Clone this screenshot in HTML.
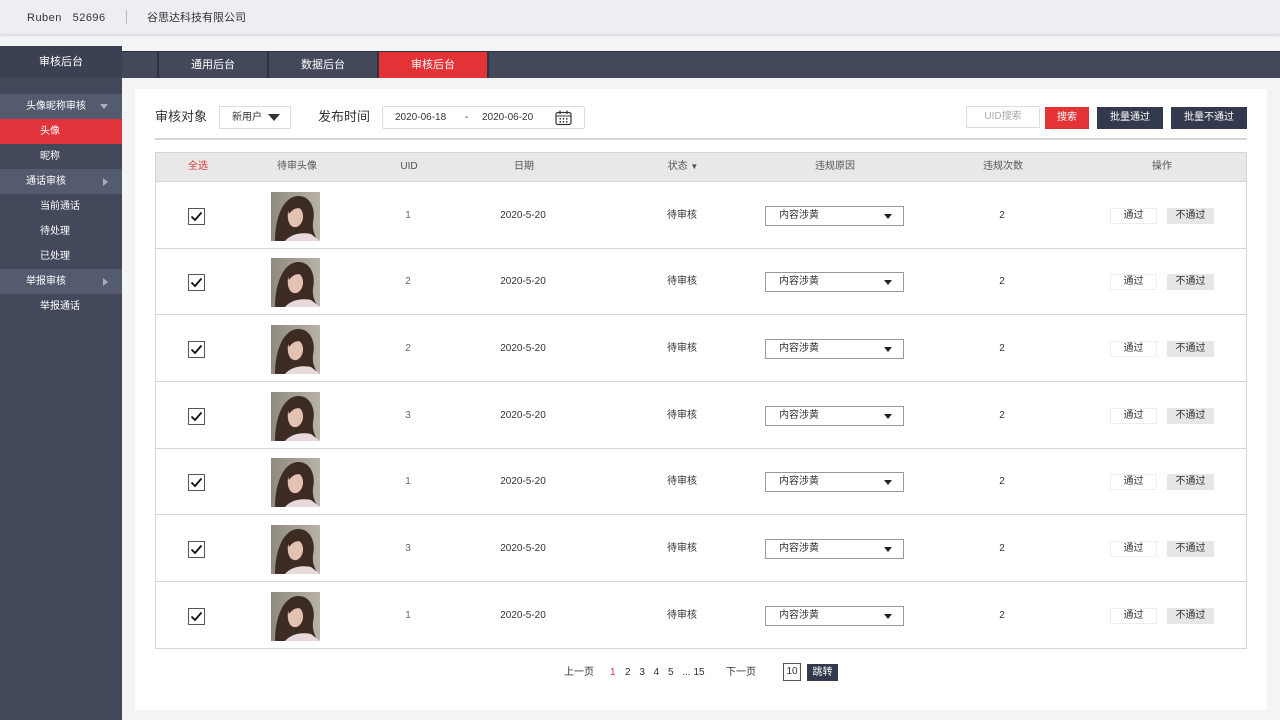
<!DOCTYPE html><html><head><meta charset="utf-8"><style>
*{margin:0;padding:0;box-sizing:border-box}
body{width:1280px;height:720px;overflow:hidden;background:#f3f4f6;font-family:"Liberation Sans","Noto Sans CJK SC",sans-serif;position:relative;font-size:10px;line-height:14px;color:#333}
.a{position:absolute}
.top{left:0;top:0;width:1280px;height:34px;background:#eceef2;box-shadow:0 1px 3px #c8ccd6}
.side{left:0;top:46px;width:122px;height:674px;background:#43485b}
.sh{left:0;top:46px;width:122px;height:32px;background:#3b4053;color:#fff;font-size:11px;text-align:center;line-height:32px}
.tabs{left:122px;top:51px;width:1158px;height:27px;background:#43485b;border-top:1px solid #2e3242}
.tab{top:0;height:26px;width:110px;color:#fff;font-size:11px;text-align:center;line-height:26px;border-left:2px solid #2e3242}
.it{left:0;width:122px;height:25px;line-height:25px;color:#fff;font-size:10px}
.sec{background:#555b6f;padding-left:26px}
.sub{padding-left:40px}
.tri{position:absolute;right:14px;top:10px;width:0;height:0}
.panel{left:135px;top:89px;width:1132px;height:621px;background:#fff}
.btn{height:22px;line-height:22px;text-align:center;font-size:10px}
.row{left:155px;width:1092px;border-bottom:1px solid #d6d6d6}
.c{position:absolute;text-align:center;transform:translateX(-50%);white-space:nowrap;height:14px;line-height:14px}
.cb{width:17px;height:17px;border:1px solid #555;background:#fff}
.sel{width:139px;height:20px;border:1px solid #999;font-size:10px;line-height:18px;padding-left:13px;text-align:left}
</style></head><body>
<div class="a top"></div>
<div class="a" style="left:27px;top:10px;font-size:11px;line-height:16px;color:#333;letter-spacing:.5px">Ruben&nbsp;&nbsp;&nbsp;52696</div>
<div class="a" style="left:126px;top:10px;width:1px;height:14px;background:#bbb"></div>
<div class="a" style="left:147px;top:10px;font-size:11px;line-height:16px;color:#333">谷思达科技有限公司</div>
<div class="a side"></div>
<div class="a tabs">
<div class="a tab" style="left:35px">通用后台</div>
<div class="a tab" style="left:145px">数据后台</div>
<div class="a tab" style="left:255px;background:#e33336;border-left-color:#2e3242">审核后台</div>
<div class="a" style="left:365px;top:0;width:2px;height:26px;background:#2e3242"></div>
</div>
<div class="a sh">审核后台</div>
<div class="a it sec" style="top:94px">头像昵称审核<span class="tri" style="border-left:4px solid transparent;border-right:4px solid transparent;border-top:5px solid #aab;"></span></div>
<div class="a it sub" style="top:119px;background:#e0333b">头像</div>
<div class="a it sub" style="top:144px">昵称</div>
<div class="a it sec" style="top:169px">通话审核<span class="tri" style="top:9px;border-top:4px solid transparent;border-bottom:4px solid transparent;border-left:5px solid #aab;"></span></div>
<div class="a it sub" style="top:194px">当前通话</div>
<div class="a it sub" style="top:219px">待处理</div>
<div class="a it sub" style="top:244px">已处理</div>
<div class="a it sec" style="top:269px">举报审核<span class="tri" style="top:9px;border-top:4px solid transparent;border-bottom:4px solid transparent;border-left:5px solid #aab;"></span></div>
<div class="a it sub" style="top:294px">举报通话</div>
<div class="a panel"></div>
<div class="a" style="left:155px;top:108px;font-size:13px;line-height:18px;color:#333">审核对象</div>
<div class="a" style="left:219px;top:106px;width:72px;height:23px;border:1px solid #ddd;font-size:10px;line-height:21px;padding-left:12px">新用户<span style="position:absolute;left:48px;top:7px;border-left:6px solid transparent;border-right:6px solid transparent;border-top:7px solid #333"></span></div>
<div class="a" style="left:318px;top:108px;font-size:13px;line-height:18px;color:#333">发布时间</div>
<div class="a" style="left:382px;top:106px;width:203px;height:23px;border:1px solid #ddd;border-radius:2px;font-size:10px;line-height:21px;color:#333"><span class="a" style="left:12px;line-height:21px">2020-06-18</span><span class="a" style="left:82px;line-height:21px">-</span><span class="a" style="left:99px;line-height:21px">2020-06-20</span>
<svg class="a" style="left:172px;top:3px" width="17" height="16" viewBox="0 0 17 16"><rect x="1" y="2.5" width="15" height="12" rx="2" fill="none" stroke="#333" stroke-width="1.2"/><line x1="1" y1="6" x2="16" y2="6" stroke="#333"/><line x1="5" y1="0.5" x2="5" y2="4" stroke="#333" stroke-width="1.2"/><line x1="12" y1="0.5" x2="12" y2="4" stroke="#333" stroke-width="1.2"/><g fill="#333"><rect x="4.5" y="8" width="1.5" height="1.5"/><rect x="7.7" y="8" width="1.5" height="1.5"/><rect x="11" y="8" width="1.5" height="1.5"/><rect x="4.5" y="11" width="1.5" height="1.5"/><rect x="7.7" y="11" width="1.5" height="1.5"/><rect x="11" y="11" width="1.5" height="1.5"/></g></svg></div>
<div class="a btn" style="left:966px;top:106px;width:74px;border:1px solid #ddd;color:#aaa;line-height:20px">UID搜索</div>
<div class="a btn" style="left:1045px;top:107px;width:44px;background:#e33336;color:#fff">搜索</div>
<div class="a btn" style="left:1097px;top:107px;width:66px;background:#333a4d;color:#fff">批量通过</div>
<div class="a btn" style="left:1171px;top:107px;width:76px;background:#333a4d;color:#fff">批量不通过</div>
<div class="a" style="left:155px;top:138px;width:1092px;height:2px;background:#d4d4d4"></div>
<div class="a" style="left:155px;top:152px;width:1092px;height:497px;border:1px solid #d6d6d6;border-top:none"></div>
<div class="a" style="left:155px;top:152px;width:1092px;height:30px;background:#e8e8e8;border:1px solid #d6d6d6;color:#555">
<span class="c" style="left:42px;top:7px;color:#e33336">全选</span>
<span class="c" style="left:141px;top:7px">待审头像</span>
<span class="c" style="left:253px;top:7px">UID</span>
<span class="c" style="left:368px;top:7px">日期</span>
<span class="c" style="left:527px;top:7px">状态 <span style="font-size:8px">▼</span></span>
<span class="c" style="left:679px;top:7px">违规原因</span>
<span class="c" style="left:847px;top:7px">违规次数</span>
<span class="c" style="left:1006px;top:7px">操作</span>
</div>
<svg width="0" height="0" style="position:absolute"><defs><linearGradient id="bg" x1="0" x2="1"><stop offset="0" stop-color="#8f8a7e"/><stop offset="1" stop-color="#b8b3a8"/></linearGradient><symbol id="av" viewBox="0 0 49 49"><rect width="49" height="49" fill="url(#bg)"/><path d="M4 49 C4 30 10 6 26 4 C40 3 45 18 42 30 C41 38 44 44 47 49Z" fill="#3d2c23"/><path d="M18 15 C26 12 33 17 32 26 C31 32 27 36 23 35 C18 34 16 27 17 20Z" fill="#e3c2b2"/><path d="M14 49 C20 42 30 40 40 42 L49 49Z" fill="#e8d9dc"/><path d="M16 15 C22 9 32 10 36 20 C30 15 24 14 18 22Z" fill="#3d2c23"/></symbol></defs></svg>
<div id="rows"></div>
<script>
var uids=[1,2,2,3,1,3,1],tops=[182,249,315,382,449,515,582],h='';
for(var i=0;i<7;i++){var t=tops[i],hh=(i<6?tops[i+1]:649)-t;var m=Math.round(t+hh/2);
h+='<div class="a row" style="top:'+t+'px;height:'+hh+'px"></div>';
h+='<div class="a cb" style="left:188px;top:'+(m-8)+'px"><svg width="15" height="15" viewBox="0 0 15 15" style="position:absolute;left:0;top:0"><path d="M2.5 7.5 L6 11 L12.5 3.5" fill="none" stroke="#111" stroke-width="1.8"/></svg></div>';
h+='<svg class="a" style="left:271px;top:'+(m-24)+'px" width="49" height="49"><use href="#av"/></svg>';
h+='<span class="a c" style="left:408px;top:'+(m-7)+'px;color:#666">'+uids[i]+'</span>';
h+='<span class="a c" style="left:523px;top:'+(m-7)+'px">2020-5-20</span>';
h+='<span class="a c" style="left:682px;top:'+(m-7)+'px">待审核</span>';
h+='<div class="a sel" style="left:765px;top:'+(m-10)+'px">内容涉黄<span style="position:absolute;left:118px;top:7px;border-left:4px solid transparent;border-right:4px solid transparent;border-top:5px solid #222"></span></div>';
h+='<span class="a c" style="left:1002px;top:'+(m-7)+'px">2</span>';
h+='<div class="a" style="left:1110px;top:'+(m-8)+'px;width:47px;height:16px;border:1px solid #eee;text-align:center;line-height:14px">通过</div>';
h+='<div class="a" style="left:1167px;top:'+(m-8)+'px;width:47px;height:16px;background:#e6e6e6;text-align:center;line-height:16px">不通过</div>';}
document.getElementById('rows').innerHTML=h;
</script>
<div class="a" style="left:564px;top:666px;font-size:10px">上一页</div>
<div class="a" style="left:610px;top:666px;font-size:10px;color:#e33336">1</div>
<div class="a" style="left:625px;top:666px;font-size:10px;word-spacing:6px">2 3 4 5 <span style="word-spacing:0">... 15</span></div>
<div class="a" style="left:726px;top:666px;font-size:10px">下一页</div>
<div class="a" style="left:783px;top:663px;width:18px;height:18px;border:1px solid #555;font-size:10px;line-height:16px;text-align:center">10</div>
<div class="a" style="left:807px;top:664px;width:31px;height:17px;background:#333a4d;color:#fff;font-size:10px;line-height:17px;text-align:center">跳转</div>
</body></html>
